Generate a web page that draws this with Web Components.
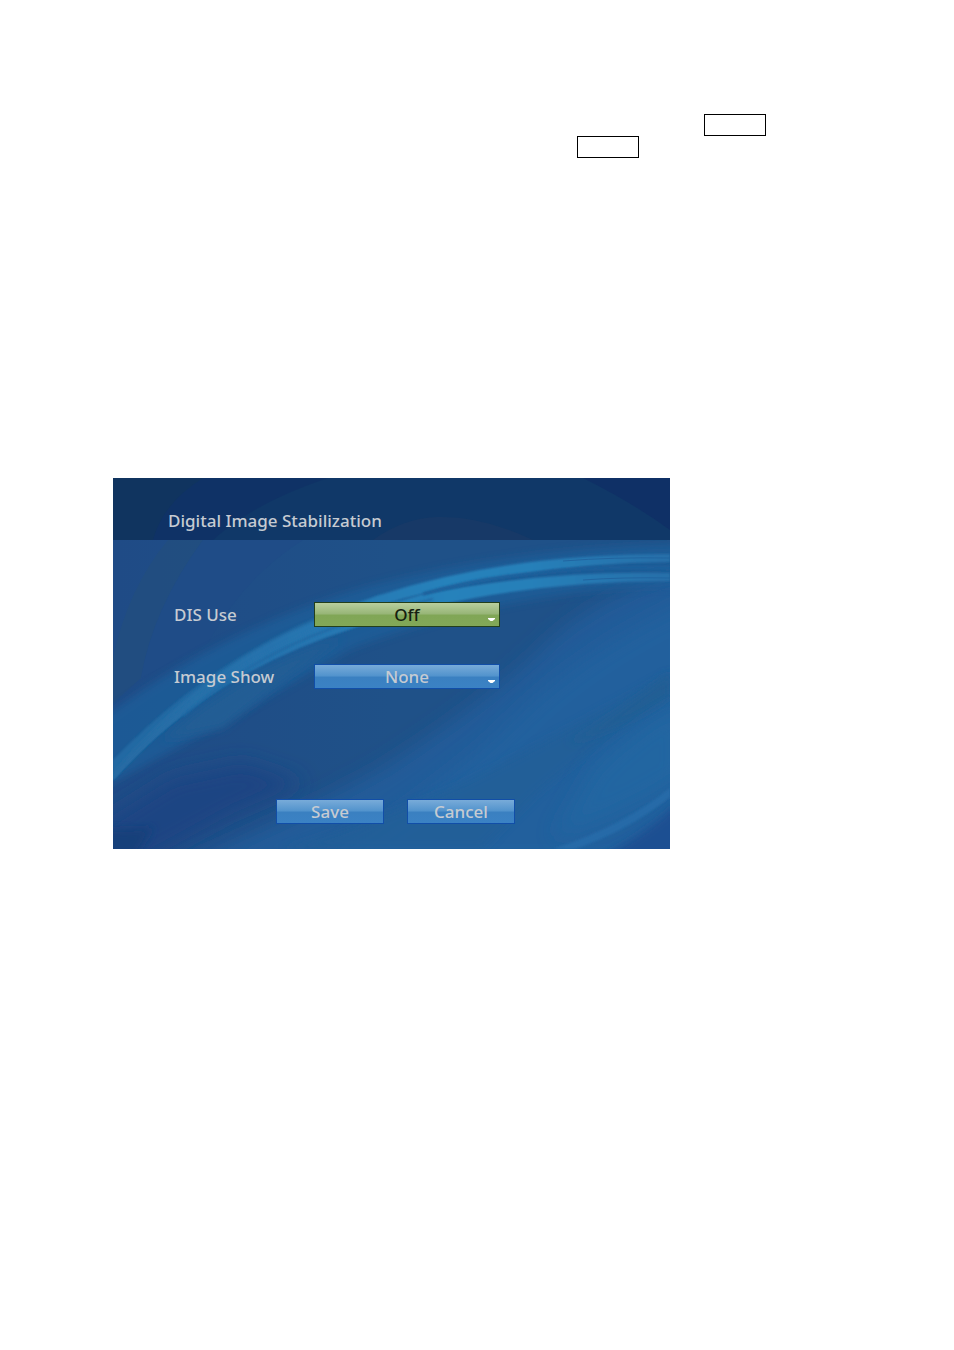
<!DOCTYPE html>
<html lang="en">
<head>
  <meta charset="UTF-8">
  <meta name="viewport" content="width=device-width, initial-scale=1.0">
  <title>Digital Image Stabilization</title>
  <style>
    body {
      margin: 0;
      background: #fff;
      font-family: "Noto Sans", "Open Sans", sans-serif;
    }
  </style>
</head>
<body>
  <manual-page>
    <outline-box slot="notes"></outline-box>
    <outline-box slot="notes" class="indent"></outline-box>
    <settings-panel heading="Digital Image Stabilization">
      <select-field label="DIS Use" options="Off,On" active></select-field>
      <select-field label="Image Show" options="None,Full"></select-field>
      <panel-button slot="actions">Save</panel-button>
      <panel-button slot="actions">Cancel</panel-button>
    </settings-panel>
  </manual-page>

  <script>
    class ManualPage extends HTMLElement {
      constructor() {
        super();
        this.attachShadow({ mode: 'open' });
      }

      connectedCallback() {
        this.shadowRoot.innerHTML = `
          <style>
            :host {
              display: flex;
              flex-direction: column;
              gap: 320px;
              padding: 114px 188px 60px 113px;
            }

            .notes {
              display: flex;
              flex-direction: column;
              align-items: flex-end;
            }

            ::slotted(.indent) {
              margin-right: 127px;
            }
          </style>
          <div class="notes"><slot name="notes"></slot></div>
          <main><slot></slot></main>
        `;
      }
    }

    class OutlineBox extends HTMLElement {
      constructor() {
        super();
        this.attachShadow({ mode: 'open' });
      }

      connectedCallback() {
        this.shadowRoot.innerHTML = `
          <style>
            :host {
              display: block;
              box-sizing: border-box;
              width: 62px;
              height: 22px;
              border: 1px solid #000;
            }
          </style>
        `;
      }
    }

    // Blue sweep of light behind the settings
    class WaveBackdrop extends HTMLElement {
      constructor() {
        super();
        this.attachShadow({ mode: 'open' });
      }

      connectedCallback() {
        this.shadowRoot.innerHTML = `
          <style>
            :host {
              display: block;
              overflow: hidden;
            }

            svg {
              display: block;
              width: 100%;
              height: 100%;
            }
          </style>
          <svg viewBox="0 0 557 371" preserveAspectRatio="none" aria-hidden="true">
            <defs>
              <linearGradient id="base" x1="0" y1="0" x2="1" y2="0">
                <stop offset="0" stop-color="#1f4b86"/>
                <stop offset=".5" stop-color="#1f5188"/>
                <stop offset="1" stop-color="#1f5188"/>
              </linearGradient>
              <linearGradient id="streak" x1="0" y1="0" x2="1" y2="0">
                <stop offset="0" stop-color="#286ba3"/>
                <stop offset=".3" stop-color="#2873ae"/>
                <stop offset=".6" stop-color="#2782bb"/>
                <stop offset=".75" stop-color="#2780b9"/>
                <stop offset="1" stop-color="#286fa9"/>
              </linearGradient>
              <filter id="b1" x="-20%" y="-20%" width="140%" height="140%"><feGaussianBlur stdDeviation="1"/></filter>
              <filter id="b4" x="-20%" y="-20%" width="140%" height="140%"><feGaussianBlur stdDeviation="4"/></filter>
              <filter id="b10" x="-40%" y="-40%" width="180%" height="180%"><feGaussianBlur stdDeviation="10"/></filter>
            </defs>
            <rect width="557" height="371" fill="url(#base)"/>
            <path d="M55 62H90Q40 130 28 200L0 225V180Q15 110 55 62Z" fill="#224e7e" opacity=".7"/>
            <path d="M90 62H190Q130 100 95 165L28 200Q40 130 90 62Z" fill="#1f4c87"/>

            <!-- dark lower left corner -->
            <path d="M-20 350L60 300L130 285L190 305L120 335L20 390H-20Z" fill="#1f4483" filter="url(#b10)"/>
            <path d="M-10 352L40 350L20 381H-10Z" fill="#183f7a" filter="url(#b4)"/>

            <!-- light lower right half -->
            <path d="M60 390Q190 335 270 290Q380 220 440 160Q490 115 580 90V390Z" fill="#205b99" filter="url(#b10)"/>
            <path d="M200 390Q330 310 400 240Q470 170 580 120V390Z" fill="#2063a0" opacity=".7" filter="url(#b10)"/>
            <path d="M170 371Q270 340 350 305Q430 265 557 195V222Q470 275 420 320L370 371Z" fill="#205f97" opacity=".7" filter="url(#b4)"/>
            <path d="M455 265Q500 240 557 195V218Q510 250 455 265Z" fill="#205f94" filter="url(#b4)"/>
            <path d="M480 290Q520 250 570 222V300Q510 340 440 360Z" fill="#2167a3" opacity=".8" filter="url(#b10)"/>
            <path d="M475 385Q530 360 570 320V385Z" fill="#1f4f92" filter="url(#b4)"/>
            <path d="M440 371Q510 348 557 310V319Q515 353 462 371Z" fill="#276ba8" filter="url(#b1)"/>

            <!-- glow round the streaks -->
            <path d="M-10 240Q110 150 257 108Q400 70 570 66V108Q400 110 240 170Q120 240 -10 310Z" fill="#1f619c" opacity=".7" filter="url(#b4)"/>
            <path d="M50 262Q130 190 230 160Q170 200 110 250Z" fill="#205d94" filter="url(#b4)"/>

            <!-- the streaks -->
            <path d="M0 282Q118 160 267 117L300 128L240 150Q94 196 0 302Z" fill="#2069a3" filter="url(#b1)"/>
            <path d="M0 302V294Q95 182 220 136Q250 123 267 117Q391 76 557 76V84Q410 85 257 130Q105 186 0 302Z" fill="url(#streak)" filter="url(#b1)"/>
            <path d="M0 302Q94 196 240 150Q387 103 557 103V95Q430 92 307 117L225 141Q94 190 0 298Z" fill="url(#streak)" filter="url(#b1)"/>
            <path d="M70 238Q140 178 220 150Q270 133 320 121" fill="none" stroke="#2069a4" stroke-width="2" filter="url(#b1)"/>
            <path d="M310 116Q360 101 424 95Q480 88 557 90" fill="none" stroke="#1f609c" stroke-width="3" filter="url(#b1)"/>
            <path d="M450 83Q500 79 557 80" fill="none" stroke="#2165a1" stroke-width="1"/>
            <path d="M470 102Q510 99 557 100" fill="none" stroke="#2165a1" stroke-width="1"/>

            <rect width="557" height="62" fill="#103868"/>
            <path d="M90 0H215Q140 25 100 62H30Q50 25 90 0Z" fill="#0f3266" opacity=".9"/>
            <path d="M0 0H90Q50 25 40 62H0Z" fill="#10345f"/>
            <path d="M260 62Q290 40 325 39Q370 38 420 62Z" fill="#193966" opacity=".8"/>
            <path d="M470 0H557V52Q520 25 470 0Z" fill="#0f3066"/>
          </svg>
        `;
      }
    }

    class SettingsPanel extends HTMLElement {
      constructor() {
        super();
        this.attachShadow({ mode: 'open' });
      }

      connectedCallback() {
        this.shadowRoot.innerHTML = `
          <style>
            :host {
              display: grid;
              max-width: 557px;
              color: #c6cbd2;
            }

            wave-backdrop, form {
              grid-area: 1 / 1;
              min-width: 0;
            }

            wave-backdrop {
              height: 0;
              min-height: 100%;
            }

            form {
              position: relative;
            }

            header {
              display: flex;
              align-items: center;
              box-sizing: border-box;
              height: 62px;
              padding: 24px 55px 0;
            }

            h1 {
              margin: 0;
              font-size: 17px;
              line-height: 24px;
              font-weight: 500;
            }

            .fields {
              display: grid;
              gap: 37px;
              padding: 62px 53px 0 61px;
            }

            .actions {
              display: flex;
              justify-content: center;
              gap: 23px;
              padding: 110px 53px 25px 61px;
            }
          </style>
          <wave-backdrop></wave-backdrop>
          <form>
            <header><h1>${this.getAttribute('heading')}</h1></header>
            <div class="fields"><slot></slot></div>
            <div class="actions"><slot name="actions"></slot></div>
          </form>
        `;
      }
    }

    class SelectField extends HTMLElement {
      constructor() {
        super();
        this.attachShadow({ mode: 'open' });
      }

      connectedCallback() {
        const options = this.getAttribute('options').split(',');

        this.shadowRoot.innerHTML = `
          <style>
            :host {
              display: grid;
              grid-template-columns: 140px 186px;
              align-items: center;
              font-size: 17px;
              line-height: 24px;
              font-weight: 500;
            }

            .control {
              position: relative;
              display: grid;
            }

            select {
              appearance: none;
              box-sizing: border-box;
              width: 100%;
              height: 25px;
              margin: 0;
              padding: 0;
              border: 1px solid #114ea8;
              border-radius: 0;
              background: linear-gradient(#78abd9, #5394cd 46%, #3a80c1 54%, #3b82c4);
              color: #c6cbd2;
              font: inherit;
              text-align: center;
              text-align-last: center;
            }

            :host([active]) select {
              border-color: #233f1c;
              background: linear-gradient(#b9cf9e, #98b678 46%, #80a656 54%, #82a858);
              color: #15200f;
            }

            svg {
              position: absolute;
              right: 5px;
              bottom: 5px;
              pointer-events: none;
            }
          </style>
          <label for="field">${this.getAttribute('label')}</label>
          <div class="control">
            <select id="field">${options.map((o) => `<option>${o}</option>`).join('')}</select>
            <svg width="7" height="4" viewBox="0 0 7 4" aria-hidden="true"><path d="M0 0H7V1L4.500 3H2.500L0 1Z" fill="#fff"/></svg>
          </div>
        `;
      }
    }

    class PanelButton extends HTMLElement {
      constructor() {
        super();
        this.attachShadow({ mode: 'open' });
      }

      connectedCallback() {
        this.shadowRoot.innerHTML = `
          <style>
            :host {
              display: block;
            }

            button {
              display: flex;
              justify-content: center;
              align-items: center;
              box-sizing: border-box;
              width: 108px;
              height: 25px;
              padding: 0;
              border: 1px solid #114ea8;
              background: linear-gradient(#78abd9, #5394cd 46%, #3a80c1 54%, #3b82c4);
              color: #c6cbd2;
              font: inherit;
              font-size: 17px;
              line-height: 24px;
              font-weight: 500;
              cursor: pointer;
            }
          </style>
          <button type="button"><slot></slot></button>
        `;
      }
    }

    customElements.define('manual-page', ManualPage);
    customElements.define('outline-box', OutlineBox);
    customElements.define('wave-backdrop', WaveBackdrop);
    customElements.define('settings-panel', SettingsPanel);
    customElements.define('select-field', SelectField);
    customElements.define('panel-button', PanelButton);
  </script>
</body>
</html>
